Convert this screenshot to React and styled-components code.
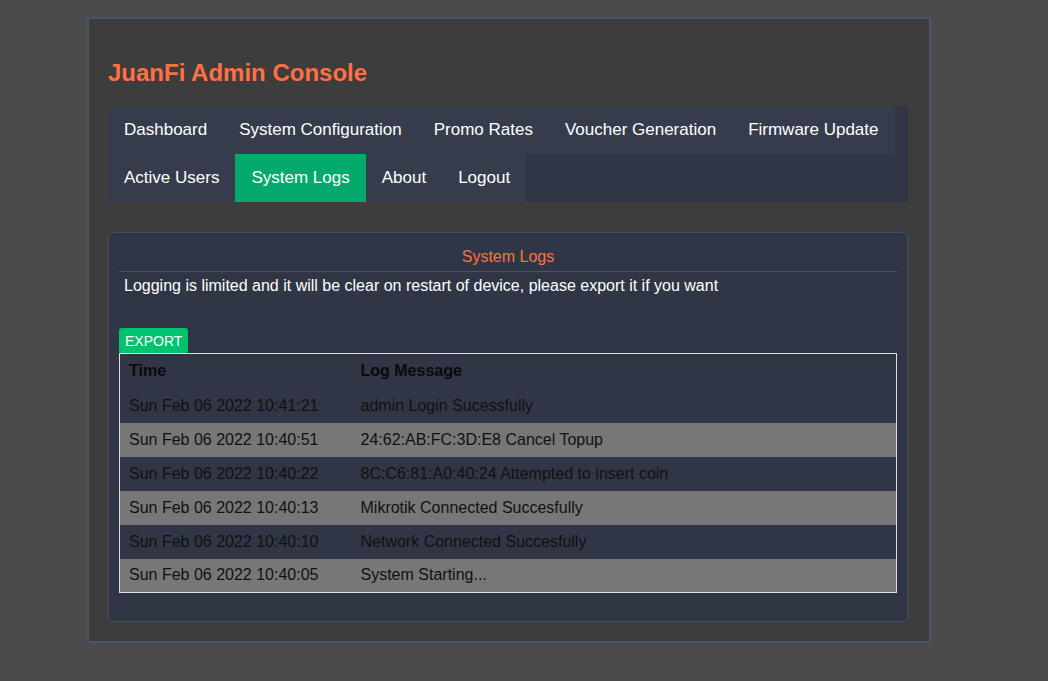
import React from "react";
import styled, { createGlobalStyle } from "styled-components";

const Global = createGlobalStyle`
  html, body { margin: 0; padding: 0; background: #4b4b4b; }
  body { font-family: "Liberation Sans", Arial, sans-serif; }
  * { box-sizing: border-box; }
`;

const Container = styled.div`
  margin: 17px 0 0 87px;
  width: 844px;
  background: #3d3d3d;
  border: 2px solid #46576c;
  padding: 40px 19px 19px 19px;
`;

const Title = styled.h1`
  margin: 0 0 19px 0;
  font-size: 24px;
  line-height: 28px;
  font-weight: bold;
  color: #ff7043;
`;

const Nav = styled.ul`
  list-style: none;
  margin: 0;
  padding: 0;
  width: 800px;
  display: flex;
  flex-wrap: wrap;
  background: #303645;
`;

const NavItem = styled.li`
  height: 48px;
  line-height: 48px;
  padding: 0 16px;
  font-size: 17px;
  color: #ffffff;
  background: ${(p) => (p.$active ? "#04aa6d" : "#363c4b")};
  cursor: pointer;
`;

const Panel = styled.div`
  margin-top: 30px;
  width: 800px;
  background: #303645;
  border: 1px solid #434f60;
  border-radius: 5px;
  padding: 10px 10px 28px 10px;
`;

const PanelTitle = styled.div`
  height: 29px;
  line-height: 27px;
  text-align: center;
  font-size: 16px;
  color: #ff7043;
  border-bottom: 1px solid #4a5262;
`;

const Note = styled.p`
  margin: 0;
  padding: 4px 5px;
  line-height: 20px;
  font-size: 16px;
  color: #ffffff;
`;

const ExportButton = styled.button`
  display: block;
  margin-top: 28px;
  height: 25px;
  padding: 0 6px;
  border: none;
  border-radius: 3px 3px 2px 2px;
  background: #00c26f;
  color: #ffffff;
  font-family: "Liberation Sans", Arial, sans-serif;
  font-size: 14px;
  cursor: pointer;
`;

const Table = styled.table`
  width: 778px;
  border-collapse: collapse;
  border: 1px solid #e0e0e0;
  font-size: 16px;
  color: #111111;
`;

const Th = styled.th`
  text-align: left;
  font-weight: bold;
  height: 35px;
  padding: 0 9px;
  color: #0a0a0a;
  width: ${(p) => p.$w || "auto"};
`;

const Tr = styled.tr`
  background: ${(p) => (p.$alt ? "#777777" : "transparent")};
`;

const Td = styled.td`
  height: 34px;
  padding: 0 9px;
`;

const logs = [
  ["Sun Feb 06 2022 10:41:21", "admin Login Sucessfully"],
  ["Sun Feb 06 2022 10:40:51", "24:62:AB:FC:3D:E8 Cancel Topup"],
  ["Sun Feb 06 2022 10:40:22", "8C:C6:81:A0:40:24 Attempted to insert coin"],
  ["Sun Feb 06 2022 10:40:13", "Mikrotik Connected Succesfully"],
  ["Sun Feb 06 2022 10:40:10", "Network Connected Succesfully"],
  ["Sun Feb 06 2022 10:40:05", "System Starting..."],
];

const navItems = [
  "Dashboard",
  "System Configuration",
  "Promo Rates",
  "Voucher Generation",
  "Firmware Update",
  "Active Users",
  "System Logs",
  "About",
  "Logout",
];

export default function App() {
  return (
    <>
      <Global />
      <Container>
        <Title>JuanFi Admin Console</Title>
        <Nav>
          {navItems.map((n) => (
            <NavItem key={n} $active={n === "System Logs"}>
              {n}
            </NavItem>
          ))}
        </Nav>
        <Panel>
          <PanelTitle>System Logs</PanelTitle>
          <Note>
            Logging is limited and it will be clear on restart of device, please
            export it if you want
          </Note>
          <ExportButton>EXPORT</ExportButton>
          <Table>
            <thead>
              <tr>
                <Th $w="232px">Time</Th>
                <Th>Log Message</Th>
              </tr>
            </thead>
            <tbody>
              {logs.map((l, i) => (
                <Tr key={i} $alt={i % 2 === 1}>
                  <Td>{l[0]}</Td>
                  <Td>{l[1]}</Td>
                </Tr>
              ))}
            </tbody>
          </Table>
        </Panel>
      </Container>
    </>
  );
}
